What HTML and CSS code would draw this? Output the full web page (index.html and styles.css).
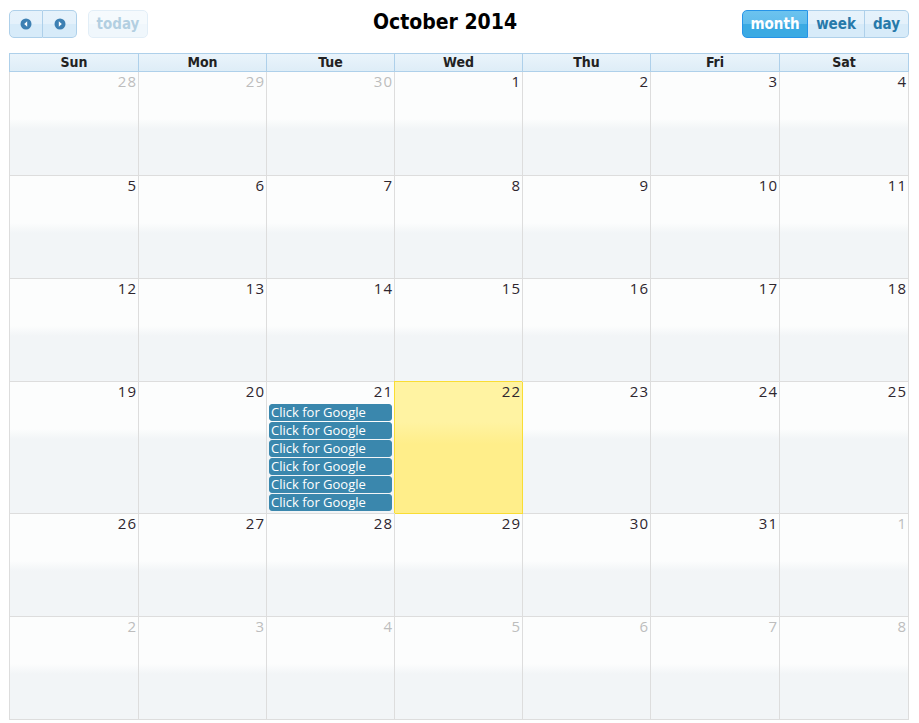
FILE: index.html
```html
<!DOCTYPE html>
<html>
<head>
<meta charset="utf-8">
<link rel="stylesheet" href="styles.css">
</head>
<body>
<div class="cal">
  <div class="toolbar">
    <div class="tb-left">
      <div class="btn-group">
        <span class="btn btn-first icon-btn"><svg width="12" height="12" viewBox="0 0 12 12"><circle cx="6" cy="6" r="5.5" fill="#3d80b3"/><path d="M7.2 3.2 L4.2 6 L7.2 8.8 Z" fill="#fff"/></svg></span><span class="btn btn-last icon-btn"><svg width="12" height="12" viewBox="0 0 12 12"><circle cx="6" cy="6" r="5.5" fill="#3d80b3"/><path d="M4.8 3.2 L7.8 6 L4.8 8.8 Z" fill="#fff"/></svg></span>
      </div>
      <span class="btn btn-single btn-disabled">today</span>
    </div>
    <h2 class="title">October 2014</h2>
    <div class="tb-right">
      <div class="btn-group">
        <span class="btn btn-first btn-active">month</span><span class="btn btn-mid">week</span><span class="btn btn-last">day</span>
      </div>
    </div>
  </div>

  <div class="head">
    <div class="hcell">Sun</div><div class="hcell">Mon</div><div class="hcell">Tue</div><div class="hcell">Wed</div><div class="hcell">Thu</div><div class="hcell">Fri</div><div class="hcell">Sat</div>
  </div>

  <div class="body">
    <div class="day other"><div class="num">28</div></div>
    <div class="day other"><div class="num">29</div></div>
    <div class="day other"><div class="num">30</div></div>
    <div class="day"><div class="num">1</div></div>
    <div class="day"><div class="num">2</div></div>
    <div class="day"><div class="num">3</div></div>
    <div class="day"><div class="num">4</div></div>

    <div class="day"><div class="num">5</div></div>
    <div class="day"><div class="num">6</div></div>
    <div class="day"><div class="num">7</div></div>
    <div class="day"><div class="num">8</div></div>
    <div class="day"><div class="num">9</div></div>
    <div class="day"><div class="num">10</div></div>
    <div class="day"><div class="num">11</div></div>

    <div class="day"><div class="num">12</div></div>
    <div class="day"><div class="num">13</div></div>
    <div class="day"><div class="num">14</div></div>
    <div class="day"><div class="num">15</div></div>
    <div class="day"><div class="num">16</div></div>
    <div class="day"><div class="num">17</div></div>
    <div class="day"><div class="num">18</div></div>

    <div class="day"><div class="num">19</div></div>
    <div class="day"><div class="num">20</div></div>
    <div class="day">
      <div class="num">21</div>
      <div class="event">Click for Google</div>
      <div class="event">Click for Google</div>
      <div class="event">Click for Google</div>
      <div class="event">Click for Google</div>
      <div class="event">Click for Google</div>
      <div class="event">Click for Google</div>
    </div>
    <div class="day today"><div class="num">22</div></div>
    <div class="day"><div class="num">23</div></div>
    <div class="day"><div class="num">24</div></div>
    <div class="day"><div class="num">25</div></div>

    <div class="day"><div class="num">26</div></div>
    <div class="day"><div class="num">27</div></div>
    <div class="day"><div class="num">28</div></div>
    <div class="day"><div class="num">29</div></div>
    <div class="day"><div class="num">30</div></div>
    <div class="day"><div class="num">31</div></div>
    <div class="day other"><div class="num">1</div></div>

    <div class="day other"><div class="num">2</div></div>
    <div class="day other"><div class="num">3</div></div>
    <div class="day other"><div class="num">4</div></div>
    <div class="day other"><div class="num">5</div></div>
    <div class="day other"><div class="num">6</div></div>
    <div class="day other"><div class="num">7</div></div>
    <div class="day other"><div class="num">8</div></div>
  </div>
</div>
</body>
</html>
```

FILE: styles.css
```css
html, body {
  margin: 0;
  padding: 0;
  background: #fff;
}
body {
  font-family: "Open Sans", "Liberation Sans", sans-serif;
  color: #362b36;
}
.cal {
  width: 900px;
  margin: 10px 0 0 9px;
}
.toolbar {
  display: grid;
  grid-template-columns: 1fr auto 1fr;
  align-items: start;
  height: 28px;
  margin-bottom: 15px;
}
.tb-left {
  display: flex;
  gap: 11px;
}
.tb-right {
  display: flex;
  justify-content: flex-end;
}
.btn-group {
  display: flex;
}
.title {
  margin: 0 28px 0 0;
  font-family: "DejaVu Sans Condensed", "DejaVu Sans", sans-serif;
  font-weight: bold;
  font-size: 21px;
  line-height: 24px;
  color: #000;
}
.btn {
  box-sizing: border-box;
  display: inline-flex;
  align-items: center;
  justify-content: center;
  height: 28px;
  padding: 1px 10px 0 10px;
  border: 1px solid #aed0ea;
  background: linear-gradient(#e6f2fb 0, #e4f1fb 50%, #d7ebf9 50%, #d7ebf9 100%);
  color: #2779aa;
  font-family: "DejaVu Sans Condensed", "DejaVu Sans", sans-serif;
  font-weight: bold;
  font-size: 15px;
  line-height: 15px;
}
.icon-btn {
  width: 34px;
  padding: 0;
}
.btn-first {
  border-radius: 5px 0 0 5px;
}
.btn-mid {
  border-left: none;
  width: 57px;
}
.btn-last {
  border-left: none;
  border-radius: 0 5px 5px 0;
}
.btn-single {
  border-radius: 5px;
  width: 60px;
}
.btn-disabled {
  opacity: 0.35;
}
.btn-active {
  background: linear-gradient(#6cc3ef 0, #5fbcec 50%, #3baae3 50%, #3baae3 100%);
  border-color: #2694e8;
  color: #fff;
  width: 66px;
}
.tb-right .btn-last { width: 44px; }

.head,
.body {
  display: grid;
  grid-template-columns: 129px 128px 128px 128px 128px 129px 129px;
}
.head {
  border: 1px solid #aed0ea;
  border-right: none;
  height: 19px;
  box-sizing: border-box;
  background: linear-gradient(#eaf4fb, #deedf7);
}
.hcell {
  border-right: 1px solid #aed0ea;
  text-align: center;
  font-family: "DejaVu Sans Condensed", "DejaVu Sans", sans-serif;
  font-weight: bold;
  font-size: 14px;
  line-height: 17px;
  color: #222;
}
.body {
  grid-template-rows: 104px 103px 103px 132px 103px 103px;
  border-left: 1px solid #ddd;
}
.day {
  box-sizing: border-box;
  border-right: 1px solid #ddd;
  border-bottom: 1px solid #ddd;
  background: linear-gradient(#fcfdfd 0, #fcfdfd 47px, #f2f5f7 57px, #f2f5f7 100%);
  min-width: 0;
}
.day.today {
  background: linear-gradient(#fff3a2 0, #fff3a2 40px, #ffee8a 62px, #ffee8a 100%);
  border-color: #f9dd34;
  box-shadow: -1px -1px 0 #f9dd34;
  position: relative;
}
.num {
  box-sizing: border-box;
  height: 21px;
  text-align: right;
  padding: 1px 1px 0 0;
  font-size: 15px;
  line-height: 16px;
  letter-spacing: 1px;
  color: #2e262e;
}
.other .num {
  color: #bdbdbd;
}
.event {
  box-sizing: border-box;
  height: 17px;
  margin: 1px 2px 0;
  border: 1px solid #3a87ad;
  border-radius: 3px;
  background: #3a87ad;
  color: #fff;
  font-size: 13px;
  line-height: 15px;
  padding: 0 1px;
  white-space: nowrap;
  overflow: hidden;
}
```
